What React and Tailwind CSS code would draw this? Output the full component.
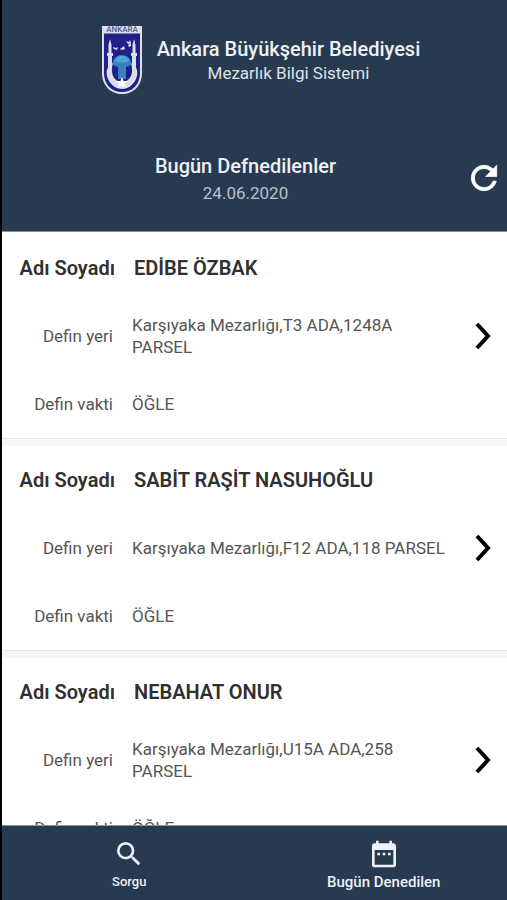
import { MdRefresh, MdSearch, MdDateRange } from 'react-icons/md'

const burials = [
  { name: 'EDİBE ÖZBAK', place: 'Karşıyaka Mezarlığı,T3 ADA,1248A PARSEL', time: 'ÖĞLE' },
  { name: 'SABİT RAŞİT NASUHOĞLU', place: 'Karşıyaka Mezarlığı,F12 ADA,118 PARSEL', time: 'ÖĞLE' },
  { name: 'NEBAHAT ONUR', place: 'Karşıyaka Mezarlığı,U15A ADA,258 PARSEL', time: 'ÖĞLE' },
]

function Logo() {
  return (
    <svg viewBox="0 0 42 70" className="h-[70px] w-[42px] shrink-0" role="img" aria-label="Ankara">
      <path d="M1 1H41V48C41 61 32 69 21 69S1 61 1 48Z" fill="#dcdfe9" />
      <path d="M3 8.500H39V48C39 60 31 67 21 67S3 60 3 48Z" fill="#20208c" />
      <text x="21" y="7" textAnchor="middle" fontSize="8" fontWeight="500" fontFamily="Roboto, sans-serif" fill="#55557f" textRendering="geometricPrecision">
        ANKARA
      </text>
      {/* minarets */}
      <path d="M9 14L10.500 20V28H12V31H11V42H7V31H6V28H7.500V20Z" fill="#dcdfe9" />
      <path d="M33 14L34.500 20V28H36V31H35V42H31V31H30V28H31.500V20Z" fill="#dcdfe9" />
      {/* birds */}
      <path d="M12 22l3 1 2-1-1 3-3-1zM19 24l4-3 1 3-3 1zM25 16l3 1 1-2 1 3-3 1zM27 20l3-2 0 3-2 1z" fill="#dcdfe9" />
      {/* crescent */}
      <path d="M12 38C5 41 4 49 8 56C11 61 16 64 21 64S31 61 34 56C38 49 37 41 30 38C33 47 30 57 21 57S9 47 12 38Z" fill="#dcdfe9" />
      {/* dome */}
      <path d="M12 39C11 34 16 30 21 30C26 30 31 34 30 39C29 42 26 41 25 42V54H17V42C16 41 13 42 12 39Z" fill="#3a80bc" />
      <path d="M14 36C15 32 18 31 21 31S27 32 28 36C25 38 17 38 14 36Z" fill="#4aa6d6" />
      <path d="M21 52L22.500 56H27L23.500 58.500L25 63L21 60.500L17 63L18.500 58.500L15 56H19.500Z" fill="#ffffff" />
    </svg>
  )
}

function Chevron() {
  return (
    <svg viewBox="0 0 16 28" className="h-7 w-4" fill="none" stroke="#000" strokeWidth="4" aria-hidden="true">
      <path d="M2 2L13 14L2 26" />
    </svg>
  )
}

function BurialCard({ name, place, time }) {
  return (
    <li className="relative border-b border-[#e8e8e8] bg-white text-[17px] leading-[22px] text-[#555]">
      <dl>
        <div className="flex h-[68px] items-center gap-[19px] text-xl font-semibold text-[#303030]">
          <dt className="w-[113px] shrink-0 text-right">Adı Soyadı</dt>
          <dd>{name}</dd>
        </div>
        <div className="flex h-[68px] items-center gap-[19px]">
          <dt className="w-[111px] shrink-0 text-right">Defin yeri</dt>
          <dd className="flex-1 pr-[52px]">{place}</dd>
        </div>
        <div className="flex h-[68px] items-center gap-[19px]">
          <dt className="w-[111px] shrink-0 text-right">Defin vakti</dt>
          <dd>{time}</dd>
        </div>
      </dl>
      <button aria-label={name} className="absolute inset-y-0 right-0 flex items-center px-4">
        <Chevron />
      </button>
    </li>
  )
}

export default function App() {
  return (
    <div className="flex h-screen flex-col border-l-2 border-black bg-white font-['Roboto',sans-serif]">
      <header className="h-[232px] shrink-0 border-b border-[#8a9199] bg-[#283a50] text-white">
        <div className="flex items-center justify-center gap-3.5 pt-[25px] pl-3">
          <Logo />
          <div className="text-center">
            <h1 className="text-xl leading-[26px] font-medium text-[#eef1f5]">Ankara Büyükşehir Belediyesi</h1>
            <p className="text-[17px] leading-[22px] text-[#dde2e8]">Mezarlık Bilgi Sistemi</p>
          </div>
        </div>
        <div className="relative mt-14 pr-[18px] text-center">
          <h2 className="text-xl leading-[30px] font-medium text-[#eef1f5]">Bugün Defnedilenler</h2>
          <p className="text-[17px] leading-6 text-[#b9c1ca]">24.06.2020</p>
          <button aria-label="Yenile" className="absolute top-2 right-1">
            {/* only the arrow gets the heavier outline, not the icon's bounding path */}
            <MdRefresh className="size-[38px] [&>path:last-child]:stroke-white [&>path:last-child]:stroke-[0.5]" />
          </button>
        </div>
      </header>

      <main className="min-h-0 flex-1 overflow-y-auto pt-0.5 [scrollbar-width:none]">
        <ul className="flex flex-col gap-[7px] bg-[#f6f6f6]">
          {burials.map((b) => (
            <BurialCard key={b.name} {...b} />
          ))}
        </ul>
      </main>

      <nav className="grid h-[75px] shrink-0 grid-cols-2 gap-2 border-t border-[#8a9199] bg-[#283a50] pl-1 text-[#eef1f5]">
        <button className="flex flex-col items-center pt-3">
          <MdSearch className="size-8" />
          <span className="text-[13px] leading-6 font-medium">Sorgu</span>
        </button>
        <button className="flex flex-col items-center pt-3">
          <MdDateRange className="size-8" />
          <span className="text-[15px] leading-6 font-medium">Bugün Denedilen</span>
        </button>
      </nav>
    </div>
  )
}
